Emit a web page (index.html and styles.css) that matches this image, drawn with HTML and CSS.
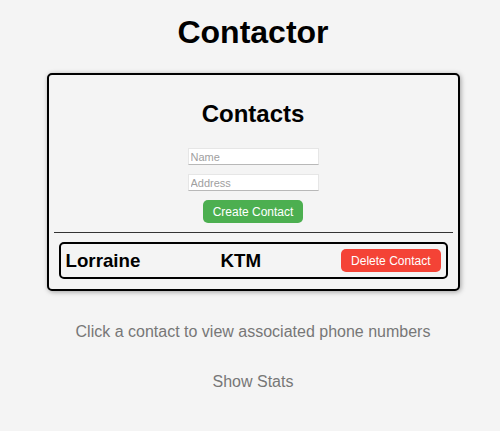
FILE: index.html
```html
<!DOCTYPE html>
<html>
<head>
<meta charset="utf-8">
<link rel="stylesheet" href="styles.css">
</head>
<body>
<div class="app">
  <h1 class="title">Contactor</h1>
  <div class="card">
    <h2 class="card-title">Contacts</h2>
    <div class="form">
      <input class="field" type="text" placeholder="Name">
      <input class="field" type="text" placeholder="Address">
      <button class="btn btn-create">Create Contact</button>
    </div>
    <hr class="divider">
    <div class="contact">
      <h3 class="contact-name">Lorraine</h3>
      <h3 class="contact-address">KTM</h3>
      <button class="btn btn-delete">Delete Contact</button>
    </div>
  </div>
  <p class="hint">Click a contact to view associated phone numbers</p>
  <p class="stats">Show Stats</p>
</div>
</body>
</html>
```

FILE: styles.css
```css
html, body {
  margin: 0;
  padding: 0;
  background: #f4f4f4;
  font-family: "Liberation Sans", Arial, sans-serif;
}

.app {
  display: flex;
  flex-direction: column;
  align-items: center;
  padding-left: 6px;
}

.title {
  font-size: 32px;
  font-weight: bold;
  line-height: 37px;
  margin: 14px 0 22px;
  color: #000;
}

.card {
  box-sizing: border-box;
  width: 413px;
  border: 2px solid #000;
  border-radius: 5px;
  padding: 5px;
  box-shadow: 1px 1px 5px rgba(0, 0, 0, 0.35);
  background: #f4f4f4;
}

.card-title {
  font-size: 24px;
  font-weight: bold;
  line-height: 28px;
  text-align: center;
  margin: 20px 0 20px;
}

.form {
  display: flex;
  flex-direction: column;
  align-items: center;
  gap: 9px;
}

.field {
  box-sizing: border-box;
  width: 131px;
  height: 17px;
  padding: 1px 2px;
  font-family: "Liberation Sans", Arial, sans-serif;
  font-size: 11px;
  background: #fff;
  border: 1px solid #e6e6e6;
  border-bottom-color: #b8b8b8;
  outline: none;
}

.field::placeholder {
  color: #a0a0a0;
}

.btn {
  border: none;
  border-radius: 5px;
  color: #fff;
  font-family: "Liberation Sans", Arial, sans-serif;
  font-size: 12px;
  line-height: 14px;
  padding: 5px 10px 4px;
  cursor: pointer;
}

.btn-create {
  background: #4caf50;
}

.btn-delete {
  background: #f44336;
}

.divider {
  border: none;
  border-top: 1px solid #333;
  margin: 9px 0 9px;
  height: 0;
}

.contact {
  display: flex;
  justify-content: space-between;
  align-items: center;
  margin: 0 5px 5px;
  padding: 5px;
  border: 2px solid #000;
  border-radius: 5px;
}

.contact-name,
.contact-address {
  margin: 0;
  font-size: 18.72px;
  font-weight: bold;
  line-height: 22px;
}

.hint,
.stats {
  margin: 0;
  font-size: 16px;
  line-height: 18px;
  color: #777;
}

.hint {
  margin-top: 32px;
}

.stats {
  margin-top: 32px;
}
```
